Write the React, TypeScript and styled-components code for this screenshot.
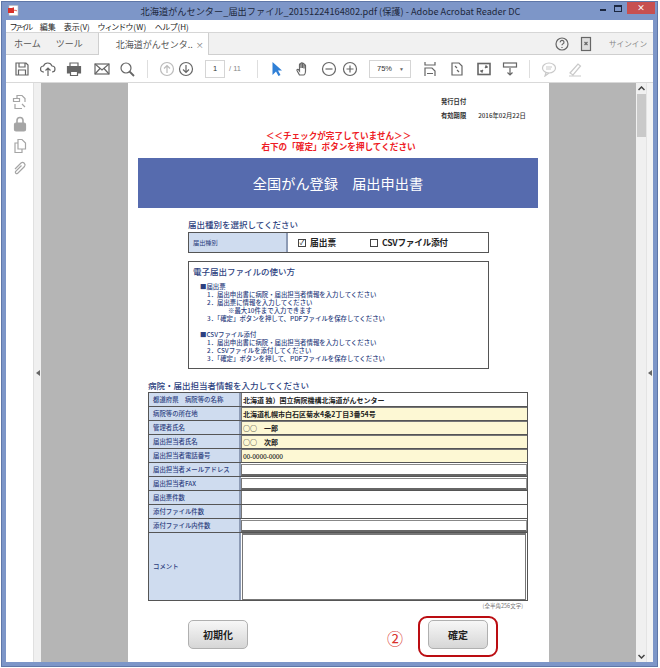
import React from "react";
import styled, { createGlobalStyle } from "styled-components";

const Global = createGlobalStyle`
  html, body { margin: 0; padding: 0; background: #fff; }
  #root { width: 660px; height: 668px; overflow: hidden; }
  * { box-sizing: border-box; }
`;
const JP = `"Noto Sans CJK JP", "Noto Sans", sans-serif`;

const Screen = styled.div`
  width: 660px; height: 668px; padding: 1px 2px 1px 1px; font-family: ${JP}; background: #fff;
`;
const Win = styled.div`
  width: 657px; height: 666px; background: #7d96c8; border: 1px solid #5f77a8; padding: 0 4px 4px 4px;
  display: flex; flex-direction: column;
`;
const TitleBar = styled.div`
  height: 18px; display: flex; align-items: center; position: relative; flex: none;
`;
const TitleText = styled.div`
  flex: 1; text-align: center; font-size: 9.2px; color: #20283c; white-space: nowrap; padding-left: 2px;
`;
const PdfIcon = styled.svg`
  width: 11px; height: 11px; position: absolute; left: 2px; top: 3px;
`;
const WinBtns = styled.div`
  display: flex; align-items: flex-start; position: absolute; right: -2px; top: 0;
`;
const WinBtn = styled.div`
  width: 15px; height: 12px; display: flex; align-items: center; justify-content: center;
`;
const MinGlyph = styled.span`width: 6px; height: 2px; background: #1b2740; margin-top: 3px;`;
const MaxGlyph = styled.span`width: 8px; height: 7px; border: 1px solid #1b2740; border-top-width: 2px;`;
const CloseBtn = styled(WinBtn)`
  width: 28px; margin-left: 2px; background: #c75050; color: #fff; font-weight: 700; font-size: 8px; line-height: 1;
`;
const MenuBar = styled.div`
  height: 12px; background: #fff; display: flex; align-items: center; padding-left: 4px; gap: 8px; flex: none;
  font-size: 8px; color: #222; white-space: nowrap; font-feature-settings: "palt";
`;
const MenuItem = styled.span<{ $ls?: number }>`
  letter-spacing: ${(p) => p.$ls ?? 0}px;
`;
const TabsBar = styled.div`
  height: 23px; background: #f1f1f1; border-top: 1px solid #d6d6d6; border-bottom: 1px solid #cfcfcf; display: flex; flex: none; align-items: stretch; font-size: 9px; color: #555; position: relative;
`;
const TabLink = styled.div<{ $pl: number }>`
  display: flex; align-items: center; padding-left: ${(p) => p.$pl}px; white-space: nowrap;
`;
const ActiveTab = styled.div`
  width: 111px; margin-left: 15px; margin-bottom: -1px; background: #fff; border-left: 1px solid #cfcfcf; border-right: 1px solid #cfcfcf;
  display: flex; align-items: center; padding-left: 17px; white-space: nowrap; color: #555;
`;
const TabClose = styled.span`font-size: 8px; color: #777; margin-left: auto; margin-right: 4px;`;
const TabRight = styled.div`
  margin-left: auto; display: flex; align-items: center; padding-right: 6px; color: #666;
`;
const SignIn = styled.span`margin-left: 15px; color: #888; font-size: 7.6px;`;
const Toolbar = styled.div`
  height: 28px; background: #fff; border-bottom: 1px solid #d9d9d9; display: flex; align-items: center; flex: none; padding-left: 8px; color: #666;
`;
const Tool = styled.svg<{ $ml?: number; $c?: string }>`
  width: 16px; height: 16px; flex: none; margin-left: ${(p) => p.$ml ?? 0}px; fill: none; stroke: ${(p) => p.$c ?? "currentColor"}; stroke-width: 1.2;
`;
const Sep = styled.div<{ $ml: number }>`
  width: 1px; height: 18px; background: #dedede; margin-left: ${(p) => p.$ml}px; flex: none;
`;
const PageBox = styled.div`
  width: 20px; height: 18px; border: 1px solid #d5d5d5; margin-left: 11px; font-size: 7.5px; color: #333; display: flex; align-items: center; justify-content: center; flex: none; font-family: "Liberation Sans", sans-serif;
`;
const PageTotal = styled.div`
  font-size: 7.5px; color: #888; margin-left: 4px; width: 25px; flex: none; font-family: "Liberation Sans", sans-serif;
`;
const ZoomBox = styled.div`
  width: 42px; height: 18px; border: 1px solid #d5d5d5; margin-left: 11px; font-size: 7.5px; color: #333; display: flex; align-items: center; justify-content: space-between; padding: 0 6px 0 7px; flex: none; font-family: "Liberation Sans", sans-serif;
`;
const Caret = styled.span`font-size: 5px; color: #666;`;
const Body = styled.div`
  flex: 1; min-height: 0; display: flex; background: #b5b5b5;
`;
const Rail = styled.div`
  width: 27px; background: #fff; display: flex; flex-direction: column; align-items: center; padding-top: 11px; gap: 6px; flex: none; color: #a5a5a5;
`;
const Strip = styled.div`
  width: 8px; background: #f0f0f0; border-left: 1px solid #e0e0e0; flex: none; display: flex; align-items: center; justify-content: center;
`;
const Arrow = styled.div`
  width: 0; height: 0; border-top: 3px solid transparent; border-bottom: 3px solid transparent; border-right: 4px solid #666;
`;
const Gutter = styled.div`width: 87px; flex: none;`;
const Paper = styled.div`
  width: 421px; flex: none; background: #fff; padding-top: 11px; overflow: hidden; color: #333;
`;
const Issue = styled.div`
  display: flex; margin-left: 313px; font-size: 6.3px; font-weight: 700; height: 14px; align-items: center; white-space: nowrap; color: #333;
`;
const IssueValue = styled.span`margin-left: 12px; font-weight: 500;`;
const Warning = styled.div`
  color: #ee1c25; font-size: 8.6px; font-weight: 700; text-align: center; line-height: 11px; margin-top: 8px; white-space: nowrap;
`;
const Banner = styled.div`
  margin: 6px 11px 0 10px; height: 50px; background: #566bae; color: #fff; font-size: 14.2px; display: flex; align-items: center; justify-content: center; white-space: nowrap;
`;
const Section = styled.div<{ $ml: number; $mt: number }>`
  margin: ${(p) => p.$mt}px 0 0 ${(p) => p.$ml}px; color: #2d3f80; font-size: 8.5px; font-weight: 500; line-height: 12px; white-space: nowrap;
`;
const KindRow = styled.div`
  width: 301px; margin-left: 60px; height: 21px; border: 1px solid #555; display: flex; align-items: stretch; margin-top: 2px;
`;
const KindLabel = styled.div`
  width: 99px; background: #cfdcef; border-right: 2px solid #8d9bb5; color: #2d3f80; font-size: 6.2px; display: flex; align-items: center; padding-left: 4px; flex: none;
`;
const KindValue = styled.div`
  display: flex; align-items: center; padding-left: 10px; font-size: 8.7px; font-weight: 700; color: #222; white-space: nowrap;
`;
const Box = styled.span`
  width: 8px; height: 8px; border: 1px solid #444; display: inline-flex; align-items: center; justify-content: center; margin-right: 4px; font-size: 7px; font-weight: 400; line-height: 1;
`;
const CsvLabel = styled.span`display: flex; align-items: center; margin-left: 34px; letter-spacing: -.3px;`;
const Guide = styled.div`
  width: 301px; margin: 8px 0 0 60px; height: 108px; border: 1px solid #555; padding: 3px 0 0 4px; color: #2d3f80;
`;
const GuideTitle = styled.div`font-size: 8.5px; font-weight: 500; line-height: 12px; margin-bottom: 6px; white-space: nowrap;`;
const GuideLine = styled.div<{ $i: number; $gap?: number }>`
  font-size: 6.4px; line-height: 8px; font-weight: 500; padding-left: ${(p) => p.$i}px; margin-top: ${(p) => p.$gap ?? 0}px; white-space: nowrap;
`;
const Grid = styled.div`
  width: 380px; margin-left: 20px; margin-top: 1px; border: 1px solid #555;
`;
const Row = styled.div`
  height: 14px; display: flex; border-bottom: 1px solid #555;
`;
const CommentRow = styled.div`
  height: 67px; display: flex;
`;
const Th = styled.div`
  width: 92px; flex: none; background: #cfdcef; border-right: 2px solid #8d9bb5; color: #2d3f80; font-size: 6.4px; font-weight: 500; display: flex; align-items: center; padding-left: 4px; white-space: nowrap;
`;
const Td = styled.div<{ $v?: "y" | "i" }>`
  flex: 1; min-width: 0; display: flex; align-items: center; padding-left: 1px; font-size: 7px; font-weight: 700; color: #222; white-space: nowrap;
  background: ${(p) => (p.$v === "y" ? "#fdf8d4" : "#fff")};
  border-left: 1px solid #777;
  ${(p) => (p.$v === "y" ? "border-top: 1px solid #777;" : "")}
  ${(p) => (p.$v === "i" ? "border-top: 1px solid #888; border-bottom: 2px solid #666; border-right: 1px solid #999; margin-top: 1px;" : "")}
`;
const Phone = styled.span`font-weight: 500; font-size: 6.6px; letter-spacing: -.2px;`;
const Area = styled.div`
  flex: 1; border: 1px solid #777; border-top-width: 2px; background: #fff; margin-right: 1px; margin-left: 1px;
`;
const Note = styled.div`
  width: 400px; text-align: right; padding-right: 5px; font-size: 5.5px; line-height: 8px; color: #777; white-space: nowrap; margin-top: 1px;
`;
const Actions = styled.div`
  display: flex; align-items: flex-start; margin-top: 6px; padding-left: 60px;
`;
const Btn = styled.div`
  width: 60px; height: 29px; border: 1px solid #b0b0b0; border-radius: 5px; background: linear-gradient(#f7f7f7, #d6d6d6);
  display: flex; align-items: center; justify-content: center; font-size: 10px; font-weight: 700; color: #222; flex: none;
`;
const ResetBtn = styled(Btn)`margin-top: 4px;`;
const Circled = styled.div`
  font-size: 16px; color: #d8322b; margin: 14px 0 0 139px; width: 31px; flex: none; line-height: 1;
`;
const Highlight = styled.div`
  width: 80px; height: 41px; border: 2px solid #bb0d12; border-radius: 9px; display: flex; align-items: flex-start; justify-content: center; padding-top: 2px; flex: none;
`;
const Scroll = styled.div`
  width: 10px; background: #f0f0f0; flex: none; display: flex; flex-direction: column; align-items: center; padding-top: 3px;
`;
const Thumb = styled.div`
  width: 9px; height: 43px; background: #c9c9c9; margin-top: 3px; flex: none;
`;
const Chevron = styled.svg<{ $end?: boolean }>`
  width: 7px; height: 5px; flex: none; fill: none; stroke: #444; stroke-width: 1.5;
  ${(p) => (p.$end ? "margin-top: auto; margin-bottom: 3px;" : "")}
`;
const RightStrip = styled.div`
  flex: 1; background: #f4f4f4; border-left: 1px solid #e4e4e4; display: flex; align-items: center; justify-content: center;
`;

const rows: { label: string; value?: React.ReactNode; v?: "y" | "i" }[] = [
  { label: "都道府県　病院等の名称", value: "北海道 独）国立病院機構北海道がんセンター" },
  { label: "病院等の所在地", value: "北海道札幌市白石区菊水4条2丁目3番54号", v: "y" },
  { label: "管理者氏名", value: "○○　一郎", v: "y" },
  { label: "届出担当者氏名", value: "○○　次郎", v: "y" },
  { label: "届出担当者電話番号", value: <Phone>00-0000-0000</Phone>, v: "y" },
  { label: "届出担当者メールアドレス", v: "i" },
  { label: "届出担当者FAX", v: "i" },
  { label: "届出票件数" },
  { label: "添付ファイル件数" },
  { label: "添付ファイル内件数", v: "i" },
];

export default function App() {
  return (
    <>
      <Global />
      <Screen>
        <Win>
          <TitleBar>
            <PdfIcon viewBox="0 0 11 11">
              <rect x="1" y="0.5" width="9" height="10" fill="#fff" stroke="#bbb" strokeWidth="0.6" />
              <rect x="0" y="3" width="6" height="5" fill="#d8312a" />
              <path d="M3 8c2-3 3-5 2-6M4 6c2-1 4-1 5 0" stroke="#d8312a" strokeWidth="0.8" fill="none" />
            </PdfIcon>
            <TitleText>北海道がんセンター_届出ファイル_20151224164802.pdf (保護) - Adobe Acrobat Reader DC</TitleText>
            <WinBtns>
              <WinBtn><MinGlyph /></WinBtn>
              <WinBtn><MaxGlyph /></WinBtn>
              <CloseBtn>×</CloseBtn>
            </WinBtns>
          </TitleBar>
          <MenuBar>
            <MenuItem $ls={-1.5}>ファイル</MenuItem>
            <MenuItem>編集</MenuItem>
            <MenuItem>表示(V)</MenuItem>
            <MenuItem $ls={0.3}>ウィンドウ(W)</MenuItem>
            <MenuItem>ヘルプ(H)</MenuItem>
          </MenuBar>
          <TabsBar>
            <TabLink $pl={8}>ホーム</TabLink>
            <TabLink $pl={15}>ツール</TabLink>
            <ActiveTab>北海道がんセンタ.. <TabClose>×</TabClose></ActiveTab>
            <TabRight>
              <Tool viewBox="0 0 16 16"><circle cx="8" cy="8" r="6" /><path d="M6.2 6.4a1.9 1.9 0 1 1 2.6 1.6c-.6.3-.8.7-.8 1.3M8 11v1" /></Tool>
              <Tool $ml={8} viewBox="0 0 16 16"><rect x="3.5" y="1.5" width="9" height="13" fill="#ddd" stroke="#666" /><path d="M6.5 6l3 3M9.5 6l-3 3" /></Tool>
              <SignIn>サインイン</SignIn>
            </TabRight>
          </TabsBar>
          <Toolbar>
            <Tool viewBox="0 0 16 16"><path d="M2 2h10l2 2v10H2zM5 2v4h6V2M4.5 14V9h7v5" /></Tool>
            <Tool $ml={10} viewBox="0 0 16 16"><path d="M4 11H3.5a3 3 0 0 1 0-6 4.5 4.5 0 0 1 8.500 0 3 3 0 0 1 0 6H12M8 15V7M5.5 9.5L8 7l2.500 2.500" /></Tool>
            <Tool $ml={10} viewBox="0 0 16 16"><path d="M4 5V2h8v3" /><path d="M1.5 5.5h13V12H12v-2H4v2H1.5z" fill="#666" /><path d="M4.5 10.5h7v4h-7z" /></Tool>
            <Tool $ml={12} viewBox="0 0 16 16"><rect x="1" y="3" width="14" height="10" /><path d="M1 3l7 6 7-6M1 13l5-5.500M15 13l-5-5.500" /></Tool>
            <Tool $ml={9} viewBox="0 0 16 16"><circle cx="7" cy="7" r="5" /><path d="M10.5 10.5L15 15" strokeWidth="1.8" /></Tool>
            <Sep $ml={12} />
            <Tool $ml={11} $c="#bbb" viewBox="0 0 16 16"><circle cx="8" cy="8" r="6.5" /><path d="M8 12V4.5M5 7.5l3-3 3 3" /></Tool>
            <Tool $ml={3} viewBox="0 0 16 16"><circle cx="8" cy="8" r="6.5" /><path d="M8 4v7.5M5 8.5l3 3 3-3" /></Tool>
            <PageBox>1</PageBox>
            <PageTotal>/ 11</PageTotal>
            <Sep $ml={3} />
            <Tool $ml={11} viewBox="0 0 16 16"><path d="M3.5 1v13l3.500-3.500 2.500 4.500 2-1-2.500-4.500h4z" fill="#2f7fd6" stroke="none" /></Tool>
            <Tool $ml={10} viewBox="0 0 16 16"><path d="M4.5 14L2 9.5c-.5-1 .8-1.6 1.5-.8l1 1.3V3.5c0-1 1.5-1 1.500 0V7V2.500c0-1 1.500-1 1.500 0V7V3c0-1 1.500-1 1.500 0v4.500V4.500c0-1 1.500-1 1.500 0V10c0 2-1 4-2 4z" /></Tool>
            <Tool $ml={10} viewBox="0 0 16 16"><circle cx="8" cy="8" r="6.5" /><path d="M4.5 8h7" /></Tool>
            <Tool $ml={5} viewBox="0 0 16 16"><circle cx="8" cy="8" r="6.5" /><path d="M4.5 8h7M8 4.5v7" /></Tool>
            <ZoomBox>75%<Caret>▼</Caret></ZoomBox>
            <Tool $ml={11} viewBox="0 0 16 16"><path d="M3 1v3h10V1M3 15V7h7l3 3v5M5 12.5h6" /></Tool>
            <Tool $ml={11} viewBox="0 0 16 16"><path d="M3 2h7l3 3v9H3zM6 5l2 2M10 11L8 9" /></Tool>
            <Tool $ml={11} viewBox="0 0 16 16"><rect x="2" y="2.5" width="12" height="11" strokeWidth="1.6" /><path d="M5 11l2-2M11 5L9 7M5 11h2M5 11V9M11 5H9M11 5v2" /></Tool>
            <Tool $ml={10} viewBox="0 0 16 16"><rect x="1.5" y="2" width="13" height="4" /><path d="M8 7v7M5.5 11.5L8 14l2.500-2.500" /></Tool>
            <Sep $ml={11} />
            <Tool $ml={11} $c="#c9c9c9" viewBox="0 0 16 16"><ellipse cx="8" cy="7" rx="6.5" ry="5" /><path d="M5 11.5L4 15l4-3M5 6h6M5 8h5" /></Tool>
            <Tool $ml={10} $c="#c9c9c9" viewBox="0 0 16 16"><path d="M3 12L11 3l2.500 2L6 14zM2 15h12" /></Tool>
          </Toolbar>
          <Body>
            <Rail>
              <Tool viewBox="0 0 16 16"><path d="M5 4V1.5h5l3 3V8M3 10v4.500h7M1.500 4.500h6v3h-6zM10 10l3 3" /></Tool>
              <Tool viewBox="0 0 16 16"><rect x="2.5" y="7" width="11" height="8" rx="1.5" fill="#a5a5a5" /><path d="M5 7V4.5a3 3 0 0 1 6 0V7" strokeWidth="1.6" /></Tool>
              <Tool viewBox="0 0 16 16"><path d="M6 1.5h4l3.500 3.500v6H6zM6 5H3v9.500h7V11" /></Tool>
              <Tool viewBox="0 0 16 16"><path d="M3 9l6-6a2.500 2.500 0 0 1 3.500 3.500l-7 7a1.500 1.500 0 0 1-2-2l6-6" /></Tool>
            </Rail>
            <Strip><Arrow /></Strip>
            <Gutter />
            <Paper>
              <Issue>発行日付</Issue>
              <Issue>有効期限<IssueValue>2016年02月22日</IssueValue></Issue>
              <Warning>
                ＜＜チェックが完了していません＞＞<br />
                右下の「確定」ボタンを押してください
              </Warning>
              <Banner>全国がん登録　届出申出書</Banner>
              <Section $ml={60} $mt={10}>届出種別を選択してください</Section>
              <KindRow>
                <KindLabel>届出種別</KindLabel>
                <KindValue>
                  <Box>✓</Box>届出票
                  <CsvLabel><Box />CSVファイル添付</CsvLabel>
                </KindValue>
              </KindRow>
              <Guide>
                <GuideTitle>電子届出ファイルの使い方</GuideTitle>
                <GuideLine $i={7}>■届出票</GuideLine>
                <GuideLine $i={14}>1．届出申出書に病院・届出担当者情報を入力してください</GuideLine>
                <GuideLine $i={14}>2．届出票に情報を入力してください</GuideLine>
                <GuideLine $i={35}>※最大10件まで入力できます</GuideLine>
                <GuideLine $i={14}>3．「確定」ボタンを押して、PDFファイルを保存してください</GuideLine>
                <GuideLine $i={7} $gap={8}>■CSVファイル添付</GuideLine>
                <GuideLine $i={14}>1．届出申出書に病院・届出担当者情報を入力してください</GuideLine>
                <GuideLine $i={14}>2．CSVファイルを添付してください</GuideLine>
                <GuideLine $i={14}>3．「確定」ボタンを押して、PDFファイルを保存してください</GuideLine>
              </Guide>
              <Section $ml={20} $mt={10}>病院・届出担当者情報を入力してください</Section>
              <Grid>
                {rows.map((r) => (
                  <Row key={r.label}>
                    <Th>{r.label}</Th>
                    <Td $v={r.v}>{r.value}</Td>
                  </Row>
                ))}
                <CommentRow>
                  <Th>コメント</Th>
                  <Area />
                </CommentRow>
              </Grid>
              <Note>(全半角256文字)</Note>
              <Actions>
                <ResetBtn>初期化</ResetBtn>
                <Circled>②</Circled>
                <Highlight><Btn>確定</Btn></Highlight>
              </Actions>
            </Paper>
            <Gutter />
            <Scroll>
              <Chevron viewBox="0 0 7 5"><path d="M.5 4L3.5 1l3 3" /></Chevron>
              <Thumb />
              <Chevron $end viewBox="0 0 7 5"><path d="M.5 1l3 3 3-3" /></Chevron>
            </Scroll>
            <RightStrip><Arrow /></RightStrip>
          </Body>
        </Win>
      </Screen>
    </>
  );
}
